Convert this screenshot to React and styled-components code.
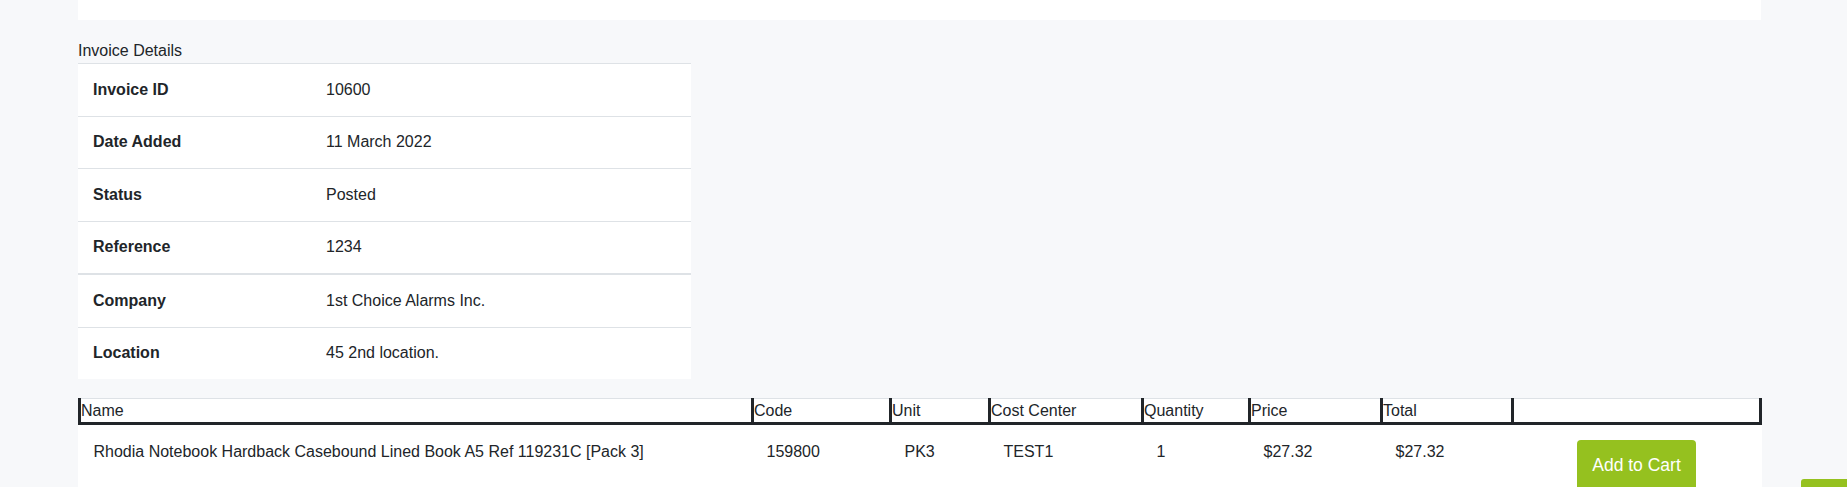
import React from 'react';
import styled, { createGlobalStyle } from 'styled-components';

const GlobalStyle = createGlobalStyle`
  html, body {
    margin: 0;
    padding: 0;
    background: #f7f8fa;
    font-family: 'Liberation Sans', Arial, sans-serif;
    font-size: 16px;
    line-height: 24px;
    color: #212529;
  }
`;

const Page = styled.div`
  width: 1683px;
  margin-left: 78px;
  padding-bottom: 40px;
`;

const TopPanel = styled.div`
  height: 20px;
  background: #fff;
`;

const Caption = styled.div`
  margin-top: 19px;
  line-height: 24px;
  color: #212529;
`;

const DetailsTable = styled.table`
  width: 613px;
  border-collapse: collapse;
  background: #fff;
  table-layout: fixed;
`;

const DetailsBody = styled.tbody`
  & + & tr:first-child td {
    border-top-width: 2px;
  }
`;

const Label = styled.td`
  width: 203px;
  padding: 13.75px 15px;
  font-weight: 700;
  border-top: 1px solid #dee2e6;
  color: #212529;
`;

const Value = styled.td`
  padding: 13.75px 15px;
  border-top: 1px solid #dee2e6;
  color: #212529;
`;

const ItemsTable = styled.table`
  width: 1681px;
  margin-top: 19px;
  border-collapse: collapse;
  table-layout: fixed;
  background: #fff;
`;

const Th = styled.th`
  padding: 0;
  text-align: left;
  font-weight: 400;
  line-height: 23px;
  color: #212529;
  border-top: 1px solid #dee2e6;
  border-left: 3px solid #212529;
  border-right: 3px solid #212529;
  border-bottom: 3px solid #212529;
`;

const Td = styled.td`
  padding: 15px 14px;
  vertical-align: top;
  color: #212529;
  text-align: ${(p) => (p.$center ? 'center' : 'left')};
`;

const CartButton = styled.button`
  font-family: 'Liberation Sans', Arial, sans-serif;
  font-size: 17.5px;
  line-height: 24px;
  color: #fff;
  background: #95c11f;
  border: none;
  border-radius: 4px;
  padding: 13px 15.5px 14px;
  cursor: pointer;
`;

const ScrollTop = styled.div`
  position: fixed;
  right: 0;
  top: 479px;
  width: 46px;
  height: 40px;
  background: #95c11f;
  border-radius: 3px 0 0 0;
`;

const details = [
  [
    ['Invoice ID', '10600'],
    ['Date Added', '11 March 2022'],
    ['Status', 'Posted'],
    ['Reference', '1234'],
  ],
  [
    ['Company', '1st Choice Alarms Inc.'],
    ['Location', '45 2nd location.'],
  ],
];

const columns = [
  ['Name', 673],
  ['Code', 138],
  ['Unit', 99],
  ['Cost Center', 153],
  ['Quantity', 107],
  ['Price', 132],
  ['Total', 131],
  ['', 248],
];

const item = {
  name: 'Rhodia Notebook Hardback Casebound Lined Book A5 Ref 119231C [Pack 3]',
  code: '159800',
  unit: 'PK3',
  costCenter: 'TEST1',
  quantity: '1',
  price: '$27.32',
  total: '$27.32',
};

const App = () => {
  return (
    <>
      <GlobalStyle />
      <Page>
        <TopPanel />
        <Caption>Invoice Details</Caption>
        <DetailsTable>
          {details.map((group, gi) => (
            <DetailsBody key={gi}>
              {group.map(([label, value]) => (
                <tr key={label}>
                  <Label>{label}</Label>
                  <Value>{value}</Value>
                </tr>
              ))}
            </DetailsBody>
          ))}
        </DetailsTable>

        <ItemsTable>
          <colgroup>
            {columns.map(([name, w], i) => (
              <col key={i} style={{ width: w }} />
            ))}
          </colgroup>
          <thead>
            <tr>
              {columns.map(([name], i) => (
                <Th key={i}>{name}</Th>
              ))}
            </tr>
          </thead>
          <tbody>
            <tr>
              <Td>{item.name}</Td>
              <Td>{item.code}</Td>
              <Td>{item.unit}</Td>
              <Td>{item.costCenter}</Td>
              <Td>{item.quantity}</Td>
              <Td>{item.price}</Td>
              <Td>{item.total}</Td>
              <Td $center>
                <CartButton type="button">Add to Cart</CartButton>
              </Td>
            </tr>
          </tbody>
        </ItemsTable>
      </Page>
      <ScrollTop />
    </>
  );
};

export default App;
